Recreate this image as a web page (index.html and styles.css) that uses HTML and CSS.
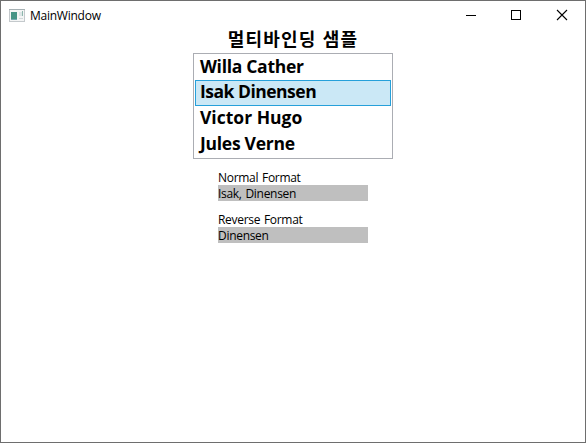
FILE: index.html
```
<!DOCTYPE html>
<html lang="ko">
<head>
<meta charset="utf-8">
<title>MainWindow</title>
<link rel="stylesheet" href="styles.css">
</head>
<body>
<div class="window">
  <header class="titlebar">
    <svg class="app-icon" width="16" height="14" viewBox="0 0 16 14">
      <rect x="0.5" y="0.5" width="15" height="12" fill="#f4f5f5" stroke="#c4c9cc"/>
      <path d="M0 .5h16" stroke="#a5b0b3"/>
      <rect x="2" y="3" width="6" height="8" fill="#479486"/>
      <path d="M2 10.5h6" stroke="#76a9b1"/>
      <rect x="10" y="3" width="4" height="4" fill="#dce5e6"/>
      <path d="M13.5 2v5" stroke="#8db7ad"/>
      <path d="M10 9.5h4" stroke="#d2d8da"/>
    </svg>
    <span class="caption">MainWindow</span>
    <div class="controls">
      <svg width="46" height="28" viewBox="0 0 46 28"><path d="M18 14.5h10" stroke="#000"/></svg>
      <svg width="45" height="28" viewBox="0 0 45 28"><rect x="17.5" y="9.5" width="9" height="9" fill="none" stroke="#000"/></svg>
      <svg width="46" height="28" viewBox="0 0 46 28"><path d="M18 9l10 10M28 9l-10 10" stroke="#000" stroke-width="1.1"/></svg>
    </div>
  </header>
  <main class="content">
    <h1 class="heading">멀티바인딩 샘플</h1>
    <ul class="list">
      <li class="item willa">Willa Cather</li>
      <li class="item isak selected">Isak Dinensen</li>
      <li class="item victor">Victor Hugo</li>
      <li class="item jules">Jules Verne</li>
    </ul>
    <section class="field">
      <div class="label">Normal Format</div>
      <div class="value">Isak, Dinensen</div>
    </section>
    <section class="field">
      <div class="label">Reverse Format</div>
      <div class="value">Dinensen</div>
    </section>
  </main>
</div>
</body>
</html>
```
FILE: styles.css
```
* { box-sizing: border-box; }
body {
  margin: 0;
  background: #fff;
  color: #000;
  font-family: "Open Sans", "Noto Sans CJK KR", sans-serif;
}
.window {
  width: 586px;
  height: 443px;
  border: 1px solid #6e6e6e;
  background: #fff;
  overflow: hidden;
}
.titlebar {
  display: flex;
  align-items: center;
  height: 28px;
  padding-left: 8px;
}
.app-icon { margin-top: 1px; }
.caption {
  margin-left: 5px;
  padding-top: 2px;
  font-size: 12px;
  line-height: 16px;
  letter-spacing: -0.25px;
}
.controls { display: flex; margin-left: auto; }
.content {
  display: flex;
  flex-direction: column;
  align-items: center;
}
.heading {
  margin: 0;
  height: 24px;
  font: 700 18px/19px "Noto Sans CJK KR", sans-serif;
  letter-spacing: 1.2px;
  white-space: nowrap;
}
.list {
  list-style: none;
  margin: 0 0 10px;
  padding: 1px;
  width: 200px;
  height: 106px;
  border: 1px solid #abadb3;
}
.item {
  height: 26px;
  padding: 0 4px;
  border: 1px solid transparent;
  font-size: 17.5px;
  font-weight: 700;
  line-height: 21px;
  white-space: nowrap;
}
.item:first-child { height: 25px; }
.item.selected { background: #cbe8f6; border-color: #26a0da; }
.willa { letter-spacing: -0.3px; }
.isak { letter-spacing: -0.5px; }
.jules { letter-spacing: -0.27px; }
.field {
  width: 150px;
  margin-bottom: 10px;
  font-size: 12px;
  line-height: 16px;
  letter-spacing: -0.3px;
  word-spacing: 1px;
}
.label, .value {
  height: 16px;
  padding-top: 1px;
}
.value { background: #bfbfbf; }
```
